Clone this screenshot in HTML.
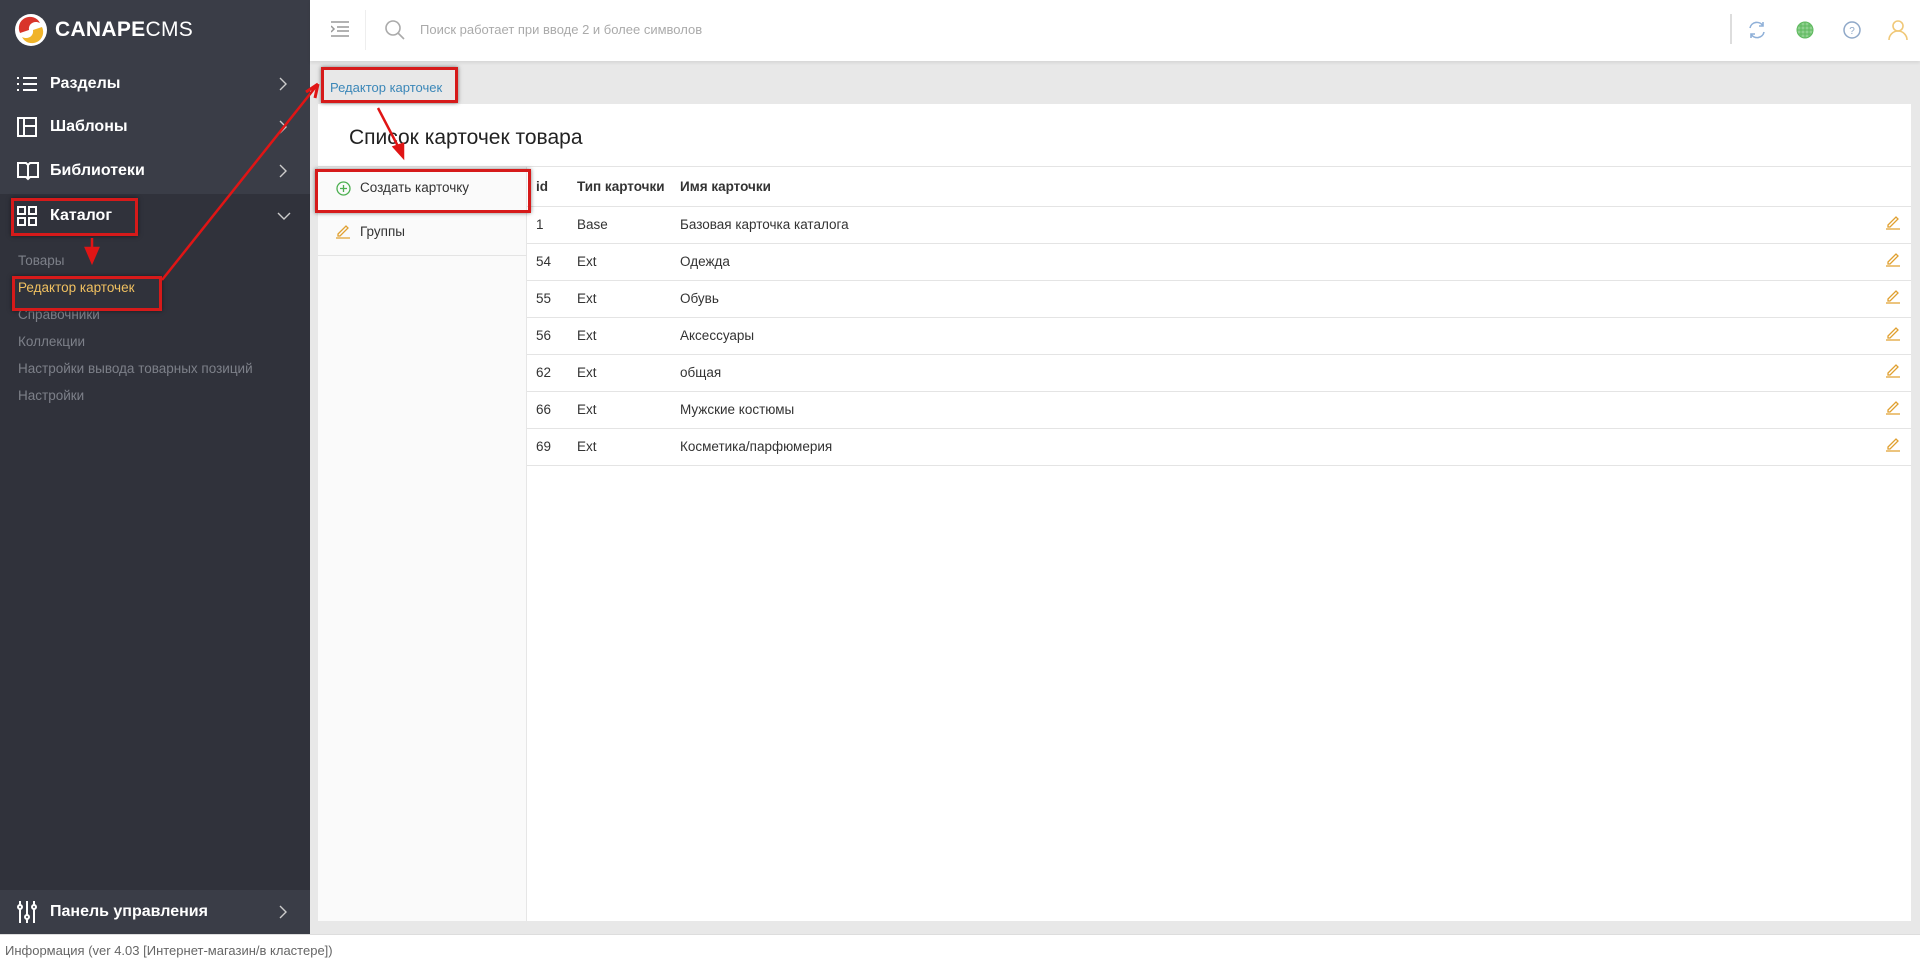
<!DOCTYPE html>
<html><head><meta charset="utf-8"><style>
*{margin:0;padding:0;box-sizing:border-box}
body{width:1920px;height:965px;position:relative;overflow:hidden;background:#e8e8e8;font-family:"Liberation Sans","Noto Sans CJK SC",sans-serif;color:#333}
.abs{position:absolute}
#side{left:0;top:0;width:310px;height:934px;background:#3a3d47}
#side .dark{position:absolute;left:0;top:194px;width:310px;height:696px;background:#30323b}
.mi{position:absolute;left:0;width:310px;height:44px;color:#fff;font-weight:bold;font-size:16px;display:flex;align-items:center}
.mi .t{position:absolute;left:50px}
.mi .ch{position:absolute;left:279px}
.mi svg{position:absolute;left:17px}
.sub{position:absolute;left:18px;font-size:13.5px;color:#7d8089}
#top{left:310px;top:0;width:1610px;height:61px;background:#fff;box-shadow:0 2px 3px rgba(0,0,0,.08)}
#panel{left:318px;top:104px;width:1593px;height:817px;background:#fff}
#lp{left:318px;top:167px;width:209px;height:754px;background:#fafafa;border-right:1px solid #e6e6e6}
table{position:absolute;left:527px;top:168px;width:1384px;border-collapse:collapse;font-size:13.5px}
td,th{height:37px;border-bottom:1px solid #e4e4e4;text-align:left;padding:0}
th{font-weight:bold;height:38px}
#foot{left:0;top:934px;width:1920px;height:31px;background:#fff;border-top:1px solid #ddd;font-size:13px;color:#666;padding:8px 0 0 5px}
.rb{position:absolute;border:3px solid #d61a1a;box-shadow:0 0 4px rgba(0,0,0,.5)}
</style></head><body>
<div id="side" class="abs"><div class="dark"></div>
<svg class="abs" style="left:14px;top:13px" width="34" height="34" viewBox="0 0 34 34"><circle cx="17" cy="17" r="16" fill="#fff"/><path d="M6 20a11 11 0 0 1 20-10c-6-3-12 1-11 7z" fill="#d9352b"/><path d="M28 14a11 11 0 0 1-20 10c6 3 12-1 11-7z" fill="#f0b429"/></svg>
<div class="abs" style="left:55px;top:18px;color:#fff;font-size:21px;letter-spacing:.3px"><b>CANAPE</b>CMS</div>
<div class="mi" style="top:62px"><svg width="20" height="16" viewBox="0 0 20 16" stroke="#fff" stroke-width="2"><path d="M0 2h2M6 2h14M0 8h2M6 8h14M0 14h2M6 14h14"/></svg><span class="t">Разделы</span><svg class="ch" style="left:279px" width="8" height="14" viewBox="0 0 8 14" fill="none" stroke="#ccc" stroke-width="1.4"><path d="M1 1l6 6-6 6"/></svg></div>
<div class="mi" style="top:105px"><svg width="20" height="20" viewBox="0 0 20 20" fill="none" stroke="#fff" stroke-width="2"><rect x="1" y="1" width="18" height="18"/><path d="M7 1v18M7 9h12"/></svg><span class="t">Шаблоны</span><svg class="ch" style="left:279px" width="8" height="14" viewBox="0 0 8 14" fill="none" stroke="#ccc" stroke-width="1.4"><path d="M1 1l6 6-6 6"/></svg></div>
<div class="mi" style="top:149px"><svg width="22" height="20" viewBox="0 0 22 20" fill="none" stroke="#fff" stroke-width="2"><path d="M1 2h8l2 2 2-2h8v14h-8l-2 2-2-2H1zM11 4v14"/></svg><span class="t">Библиотеки</span><svg class="ch" style="left:279px" width="8" height="14" viewBox="0 0 8 14" fill="none" stroke="#ccc" stroke-width="1.4"><path d="M1 1l6 6-6 6"/></svg></div>
<div class="mi" style="top:194px"><svg width="20" height="20" viewBox="0 0 20 20" fill="none" stroke="#fff" stroke-width="2"><rect x="1" y="1" width="7" height="7"/><rect x="12" y="1" width="7" height="7"/><rect x="1" y="12" width="7" height="7"/><rect x="12" y="12" width="7" height="7"/></svg><span class="t">Каталог</span><svg class="ch" style="left:277px" width="14" height="8" viewBox="0 0 14 8" fill="none" stroke="#ccc" stroke-width="1.4"><path d="M1 1l6 6 6-6"/></svg></div>
<div class="sub" style="top:253px">Товары</div>
<div class="sub" style="top:280px;color:#f0c060">Редактор карточек</div>
<div class="sub" style="top:307px">Справочники</div>
<div class="sub" style="top:334px">Коллекции</div>
<div class="sub" style="top:361px">Настройки вывода товарных позиций</div>
<div class="sub" style="top:388px">Настройки</div>
<div class="mi" style="top:890px;height:44px;background:#3a3d47"><svg width="20" height="22" viewBox="0 0 20 22" fill="none" stroke="#fff" stroke-width="2"><path d="M3 0v22M10 0v22M17 0v22"/><circle cx="3" cy="6" r="2" fill="#3a3d47"/><circle cx="10" cy="16" r="2" fill="#3a3d47"/><circle cx="17" cy="6" r="2" fill="#3a3d47"/></svg><span class="t">Панель управления</span><svg class="ch" style="left:279px" width="8" height="14" viewBox="0 0 8 14" fill="none" stroke="#ccc" stroke-width="1.4"><path d="M1 1l6 6-6 6"/></svg></div>
</div>
<div id="top" class="abs">
<svg class="abs" style="left:21px;top:21px" width="18" height="16" viewBox="0 0 18 16" stroke="#999" stroke-width="1.5" fill="none"><path d="M0 1h18M6 6h12M6 10h12M0 15h18M0 5l3 3-3 3"/></svg>
<div class="abs" style="left:55px;top:10px;width:1px;height:40px;background:#eee"></div>
<svg class="abs" style="left:75px;top:20px" width="20" height="20" viewBox="0 0 20 20" fill="none" stroke="#aaa" stroke-width="1.6"><circle cx="8" cy="8" r="7"/><path d="M13 13l6 6"/></svg>
<div class="abs" style="left:110px;top:22px;font-size:13px;color:#aaa">Поиск работает при вводе 2 и более символов</div>
<div class="abs" style="left:1420px;top:14px;width:2px;height:30px;background:#ddd"></div>
<svg class="abs" style="left:1437px;top:20px" width="20" height="20" viewBox="0 0 20 20" fill="none" stroke="#8fb0d8" stroke-width="1.6"><path d="M3 8a7 7 0 0 1 13-2M17 12a7 7 0 0 1-13 2M16 2v4h-4M4 18v-4h4"/></svg>
<svg class="abs" style="left:1485px;top:20px" width="20" height="20" viewBox="0 0 20 20" fill="#8fd08f" stroke="#5cb85c" stroke-width="1"><circle cx="10" cy="10" r="8"/><path d="M2 10h16M10 2v16M6 3v14M14 3v14M3 6h14M3 14h14" fill="none"/></svg>
<svg class="abs" style="left:1532px;top:20px" width="20" height="20" viewBox="0 0 20 20" fill="none" stroke="#8fa8c8" stroke-width="1.5"><circle cx="10" cy="10" r="8"/><text x="10" y="14" font-size="10" text-anchor="middle" fill="#8fa8c8" stroke="none" font-family="Liberation Sans">?</text></svg>
<svg class="abs" style="left:1578px;top:19px" width="20" height="22" viewBox="0 0 20 22" fill="none" stroke="#f0c878" stroke-width="1.6"><circle cx="10" cy="7" r="5"/><path d="M1 21a9 9 0 0 1 18 0"/></svg>
</div>
<div class="abs" style="left:330px;top:80px;font-size:13px;color:#3b87b8">Редактор карточек</div>
<div id="panel" class="abs"></div>
<div class="abs" style="left:349px;top:126px;font-size:21px;color:#222">Список карточек товара</div>
<div class="abs" style="left:318px;top:166px;width:1593px;height:1px;background:#e4e4e4"></div>
<div id="lp" class="abs"></div>
<svg class="abs" style="left:336px;top:181px" width="15" height="15" viewBox="0 0 15 15" fill="none" stroke="#4caf50" stroke-width="1.3"><circle cx="7.5" cy="7.5" r="6.5"/><path d="M7.5 4v7M4 7.5h7"/></svg>
<div class="abs" style="left:360px;top:180px;font-size:13.5px">Создать карточку</div>
<svg class="abs" style="left:335px;top:223px" width="16" height="16" viewBox="0 0 16 16" fill="none" stroke="#e0a030" stroke-width="1.3"><path d="M3 11l8-8 2 2-8 8H3zM1 15h14"/></svg>
<div class="abs" style="left:360px;top:224px;font-size:13.5px">Группы</div>
<div class="abs" style="left:318px;top:255px;width:209px;height:1px;background:#e4e4e4"></div>
<table>
<tr><th style="width:50px;padding-left:9px">id</th><th style="width:103px">Тип карточки</th><th>Имя карточки</th><th style="width:40px"></th></tr>
<tr><td style="padding-left:9px">1</td><td>Base</td><td>Базовая карточка каталога</td><td></td></tr>
<tr><td style="padding-left:9px">54</td><td>Ext</td><td>Одежда</td><td></td></tr>
<tr><td style="padding-left:9px">55</td><td>Ext</td><td>Обувь</td><td></td></tr>
<tr><td style="padding-left:9px">56</td><td>Ext</td><td>Аксессуары</td><td></td></tr>
<tr><td style="padding-left:9px">62</td><td>Ext</td><td>общая</td><td></td></tr>
<tr><td style="padding-left:9px">66</td><td>Ext</td><td>Мужские костюмы</td><td></td></tr>
<tr><td style="padding-left:9px">69</td><td>Ext</td><td>Косметика/парфюмерия</td><td></td></tr>
</table>
<svg class="abs" style="left:1885px;top:214px" width="16" height="240" fill="none" stroke="#e0a030" stroke-width="1.3">
<g id="p"><path d="M3 11l8-8 2 2-8 8H3zM1 15h14"/></g>
<use href="#p" y="37"/><use href="#p" y="74"/><use href="#p" y="111"/><use href="#p" y="148"/><use href="#p" y="185"/><use href="#p" y="222"/>
</svg>
<div id="foot" class="abs">Информация (ver 4.03 [Интернет-магазин/в кластере])</div>
<div class="rb" style="left:321px;top:67px;width:137px;height:36px"></div>
<div class="rb" style="left:11px;top:198px;width:127px;height:38px"></div>
<div class="rb" style="left:12px;top:276px;width:150px;height:35px"></div>
<div class="rb" style="left:315px;top:169px;width:216px;height:44px"></div>
<svg class="abs" style="left:0;top:0" width="1920" height="965" fill="none" stroke="#e01515" stroke-width="2.5">
<path d="M162 280L318 84"/><path d="M318 84l-3 14M318 84l-12 8" stroke-width="3"/>
<path d="M92 238v22"/><path d="M86 248l6 14 6-14z" fill="#e01515"/>
<path d="M378 108l24 46"/><path d="M394 147l9 10 0-13z" fill="#e01515"/>
</svg>
</body></html>
